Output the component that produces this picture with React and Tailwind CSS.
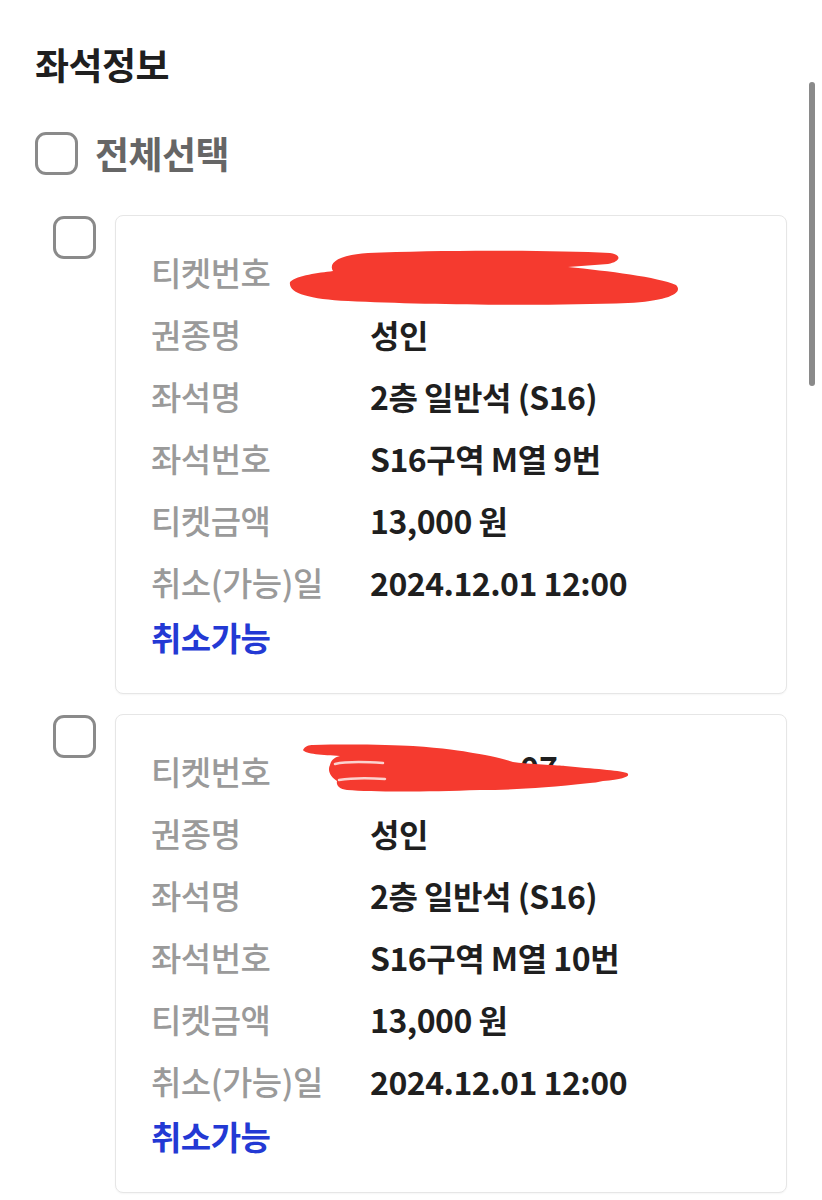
import React from "react";

const font = { fontFamily: '"Noto Sans CJK KR", "Noto Sans", sans-serif' };

function Box({ className = "" }) {
  return <div className={`w-[43px] h-[43px] rounded-[11px] border-[3px] border-[#8a8a8a] bg-white shrink-0 ${className}`} />;
}

function Row({ label, value, children }) {
  return (
    <div className="flex items-center h-[62px] relative">
      <div className="w-[219px] text-[#9a9a9a] text-[33px] leading-[44px] font-medium tracking-[-0.5px]">{label}</div>
      <div className="text-[#1f1f1f] text-[32px] leading-[44px] font-semibold tracking-[-0.5px]">{value}</div>
      {children}
    </div>
  );
}

function Scribble1() {
  return (
    <svg className="absolute left-[137px] top-[8px]" width="400" height="60" viewBox="0 0 400 60">
      <path
        d="M2 33 C10 26 30 24 45 22 C40 14 50 6 80 4 C150 1 260 1 322 4 C335 6 332 13 320 15 L280 18 C320 22 370 28 388 36 C396 44 380 52 340 54 C260 57 140 56 60 52 C20 50 0 44 2 33 Z"
        fill="#f53a2f"
      />
    </svg>
  );
}

function Scribble2() {
  return (
    <svg className="absolute left-[152px] top-[3px]" width="330" height="52" viewBox="0 0 330 52">
      <path
        d="M0 7 C2 3 6 2 10 2 C50 1 90 2 110 3 C140 5 160 8 170 10 C190 13 200 16 210 19 C235 22 255 22 262 23 C290 26 315 27 324 30 C328 33 322 36 300 38 C295 39 290 40 287 40 C240 45 210 47 177 47 C120 49 70 49 44 47 C36 46 33 42 34 38 C28 34 24 28 27 22 C28 17 32 14 37 13 C20 12 2 11 0 7 Z"
        fill="#f53a2f"
      />
      <path d="M32 21 C45 18 65 19 80 20" stroke="#fbd3cf" strokeWidth="2.5" fill="none" strokeLinecap="round" />
      <path d="M36 37 C48 35 68 35 82 36" stroke="#fbd3cf" strokeWidth="2.5" fill="none" strokeLinecap="round" />
    </svg>
  );
}

function Card({ seat, scribble }) {
  return (
    <div className="flex gap-[19px]">
      <Box className="mt-[1px]" />
      <div className="flex-1 border border-[#e6e6e6] rounded-[8px] bg-white pl-[35px] pt-[25px] pb-[32px] shadow-[0_1px_2px_rgba(0,0,0,0.04)]">
        <Row label="티켓번호" value="">
          {scribble}
        </Row>
        <Row label="권종명" value="성인" />
        <Row label="좌석명" value="2층 일반석 (S16)" />
        <Row label="좌석번호" value={seat} />
        <Row label="티켓금액" value="13,000 원" />
        <Row label="취소(가능)일" value="2024.12.01 12:00" />
        <div className="h-[48px] flex items-center text-[#2339d4] text-[33px] leading-[44px] font-bold tracking-[-0.5px]">취소가능</div>
      </div>
    </div>
  );
}

export default function App() {
  return (
    <div style={font} className="relative w-[822px] h-[1200px] bg-white overflow-hidden">
      <div className="absolute right-[7px] top-[82px] w-[6px] h-[304px] rounded-full bg-[#8a8a8a]" />
      <div className="pl-[35px] pr-[35px] pt-[40px]">
        <h1 className="text-[37px] font-bold text-[#1f1f1f] leading-[48px] tracking-[-0.5px]">좌석정보</h1>
        <div className="flex items-center gap-[17px] mt-[44px] h-[43px]">
          <Box />
          <span className="text-[37px] leading-[43px] font-bold text-[#666666] tracking-[-0.5px]">전체선택</span>
        </div>
        <div className="flex flex-col gap-[20px] mt-[40px] pl-[18px]">
          <Card seat="S16구역 M열 9번" scribble={<Scribble1 />} />
          <Card
            seat="S16구역 M열 10번"
            scribble={
              <>
                <span className="absolute left-[369px] top-[4px] text-[#1f1f1f] text-[32px] leading-[44px] font-semibold">07</span>
                <Scribble2 />
              </>
            }
          />
        </div>
      </div>
    </div>
  );
}
